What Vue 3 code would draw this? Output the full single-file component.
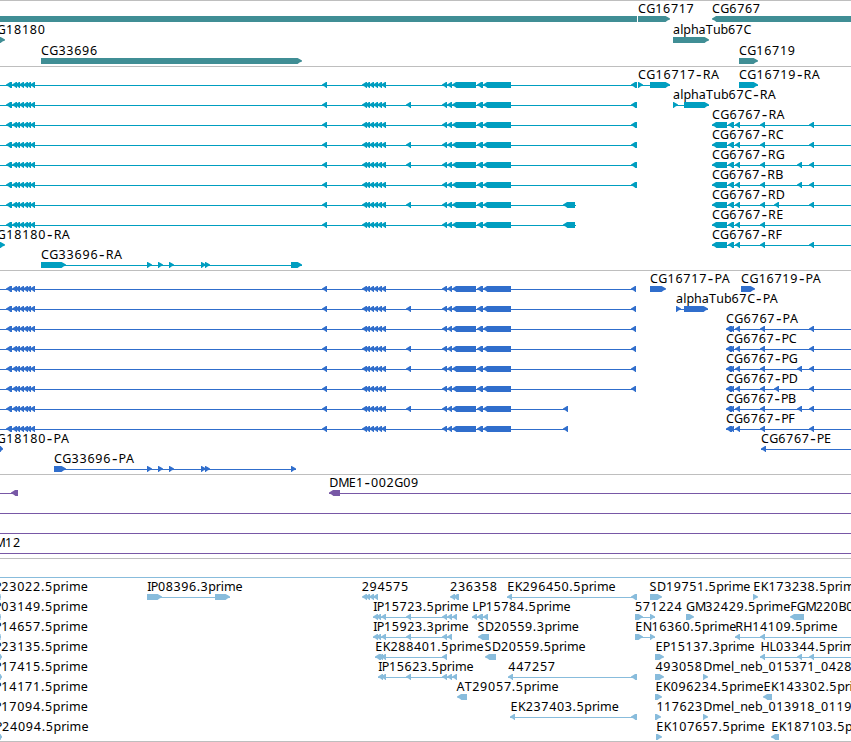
<script setup>
const WIDTH = 851

// Relative glyph widths used to distribute a label over its span.
const ADV = {
  C: 8.2, G: 9.1, A: 8.3, R: 8, P: 7.2, B: 8, D: 9.2, E: 7.5, F: 6.7, I: 3.6, L: 6.5, S: 7.6,
  T: 7.2, K: 7.8, N: 9, M: 10.4, H: 9, '-': 7.2, '.': 3.9, _: 6, a: 7.3, l: 3.2, p: 7.6, h: 7.6,
  u: 7.6, b: 7.6, r: 4.9, i: 3.3, m: 11.6, e: 7.3, n: 7.6,
}
const adv = (c) => ADV[c] ?? 7.8

// A label runs from x to end; each glyph gets its own position.
// Returns runs of text, with each hyphen as a run of its own.
function runs([text, x, end]) {
  const total = [...text].reduce((s, c) => s + adv(c), 0)
  const k = (end - x + 1) / total
  let at = x - 0.6
  return text.split(/(-)/).map((part) => {
    const xs = []
    for (const c of part) {
      xs.push((c === '-' ? at + 0.7 : at).toFixed(2))
      at += adv(c) * k
    }
    return { part, x: xs.join(' '), dash: part === '-' }
  })
}

function arrow([x1, x2, dir], y) {
  const w = x2 - x1
  const head = Math.min(5, w)
  const mid = head * 0.5
  if (dir === '<') {
    return `M${x1} ${y + 2.6}L${x1 + mid} ${y + 1}L${x1 + head - 1} ${y}H${x2}V${y + 6}H${x1 + head - 0.6}L${x1 + mid} ${y + 4.6}L${x1} ${y + 3.6}Z`
  }
  if (dir === '>') {
    return `M${x2} ${y + 2.4}L${x2 - mid} ${y + 1}L${x2 - head + 0.6} ${y}H${x1}V${y + 6}H${x2 - head + 0.6}L${x2 - mid} ${y + 4.6}L${x2} ${y + 3.4}Z`
  }
  return `M${x1} ${y}H${x2}V${y + 6}H${x1}Z`
}

const L = (...starts) => starts.map((s) => [s, s + 5, '<'])
const R = (...starts) => starts.map((s) => [s, s + 5, '>'])
// row: y of the box top, connecting lines, boxes, labels
const row = (y, lines, boxes, labels = []) => ({ y, lines, boxes, labels })

const genes = [
  row(16, [], [[0, 637, '='], [638, 670, '>'], [712, 860, '<']], [['CG16717', 638.5, 694], ['CG6767', 712.5, 760.3]]),
  row(37, [], [[0, 5, '>'], [673, 709, '>']], [['CG18180', -11, 45.3], ['alphaTub67C', 673.5, 751.3]]),
  row(58, [], [[41, 302, '>'], [739, 758, '>']], [['CG33696', 41.5, 97.5], ['CG16719', 739.5, 795.3]]),
]

const farLeft = [[6, 12, '<'], ...L(12, 15, 19, 23, 26, 30)]
const core = [
  ...farLeft, ...L(322, 362, 365, 369, 373, 377, 381), ...L(442, 447),
  [452, 476, '<'], [477, 483, '<'], [483, 511, '<'],
]
const withExtra = [1, 3, 4, 6]

function longRows(top, tail, shortTail, tailEnd, shortEnd) {
  return Array.from({ length: 8 }, (_, i) => {
    const short = i > 5
    return row(top + 20 * i, [[0, short ? shortEnd : tailEnd]],
      [...core, ...(withExtra.includes(i) ? L(406) : []), short ? shortTail : tail])
  })
}

const transcripts = [
  ...longRows(82, [631, 637, '<'], [563, 575, '<'], 637, 576),
  row(82, [[638, 670], [739, 758]], [...R(638), [650, 670, '>'], [739, 758, '>']],
    [['CG16717-RA', 638.5, 719], ['CG16719-RA', 739.5, 819.8]]),
  row(102, [[673, 709]], [...R(673), [684, 709, '>']], [['alphaTub67C-RA', 673.5, 775.7]]),
  ...[['A', 784.6, [809]], ['C', 783.6, [809]], ['G', 784.6, [797, 809]], ['B', 782.8, [797, 809]],
    ['D', 784.5, [774, 809]], ['E', 783.3, []], ['F', 781.8, [809]]].map(([k, end, xs], i) =>
    row(122 + 20 * i, [[712, WIDTH]], [[712, 727, '<'], [728, 734, '<'], ...L(735, 760, ...xs)],
      [[`CG6767-R${k}`, 712.5, end]])),
  row(242, [], [[0, 5, '>']], [['CG18180-RA', -11, 70]]),
  row(262, [[41, 302]], [[41, 66, '>'], ...R(147, 158, 169, 201, 205), [291, 302, '>']],
    [['CG33696-RA', 41.5, 122]]),
]

const proteins = [
  ...longRows(286, [631, 636, '<'], [563, 568, '<'], 636, 568),
  row(286, [], [[650, 666, '>'], [741, 755, '>']],
    [['CG16717-PA', 650.5, 729.8], ['CG16719-PA', 741.7, 820.8]]),
  row(306, [[676, 708]], [...R(676), [684, 708, '>']], [['alphaTub67C-PA', 676.5, 777.8]]),
  ...[['A', 798, [809]], ['C', 796.6, [809]], ['G', 797.5, [797, 809]], ['D', 797.4, [774, 809]],
    ['B', 795.6, [797, 809]], ['F', 794.6, [809]]].map(([k, end, xs], i) =>
    row(326 + 20 * i, [[726, WIDTH]], [[726, 732, '<'], ...L(729, 735, 760, ...xs)],
      [[`CG6767-P${k}`, 726.5, end]])),
  row(446, [[761, WIDTH]], [[0, 3, '>'], ...L(761)], [['CG18180-PA', -11, 69], ['CG6767-PE', 761.5, 831.2]]),
  row(466, [[54, 296]], [[54, 66, '>'], ...R(147, 158, 169, 201, 205, 291)], [['CG33696-PA', 54.5, 134]]),
]

const clones = [
  row(490, [[0, 18], [329, WIDTH]], [[11, 18, '<'], [329, 340, '<']], [['DME1-002G09', 329.8, 418.4]]),
  row(510, [[0, WIDTH]], []),
  row(530, [[0, WIDTH]], []),
  row(550, [[0, WIDTH]], [], [['M12', -5, 20.6]]),
]

const left = ['23022', '03149', '14657', '23135', '17415', '14171', '17094', '24094']
const stub = [1, 1, 1, 2, 2, 0, 0, 2]
const ests = [
  row(574, [[0, WIDTH]], []),
  ...left.map((n, i) => row(594 + 20 * i, [],
    stub[i] ? [[0, stub[i], '>']] : [], [[`P${n}.5prime`, i === 7 ? -4.6 : -5.4, i === 7 ? 88.4 : 87.7]])),
  row(594, [[147, 230], [507, 637]],
    [[147, 162, '>'], [215, 230, '>'], ...L(362, 365, 369, 373, 450), [453, 459, '<'], ...L(507),
      [631, 637, '<'], [650, 662, '>'], ...R(753)],
    [['IP08396.3prime', 147.8, 242.4], ['294575', 362.3, 408.4], ['236358', 450.5, 497.4],
      ['EK296450.5prime', 507.8, 615.4], ['SD19751.5prime', 650, 750.2], ['EK173238.5prime', 753.8, 861.4]]),
  row(614, [[373, 457], [635, 655], [472, 488]],
    [...L(373, 376, 381, 406, 442, 447, 452, 472), [477, 483, '<'], ...L(483), [635, 643, '>'],
      ...R(650), [686, 694, '>'], [790, 804, '<']],
    [['IP15723.5prime', 373.8, 468.4], ['LP15784.5prime', 472.8, 570.4], ['571224', 635.5, 682],
      ['GM32429.5prime', 686.5, 790], ['FGM220B09', 790.8, 861]]),
  row(634, [[373, 452], [635, 655], [735, WIDTH]],
    [...L(373, 376, 381, 406, 442, 447), [478, 489, '<'], [635, 643, '>'], ...R(650), ...L(735, 760)],
    [['IP15923.3prime', 373.8, 468.4], ['SD20559.3prime', 478, 578.6], ['EN16360.5prime', 635.8, 736],
      ['RH14109.5prime', 735.8, 837.4]]),
  row(654, [[375, 447], [760, WIDTH]],
    [[375, 381, '<'], ...L(378, 381, 442), [485, 496, '<'], [655, 664, '>'], ...L(760, 797, 809)],
    [['EK288401.5prime', 375.8, 483.4], ['SD20559.5prime', 485, 585.4], ['EP15137.3prime', 656, 754.4],
      ['HL03344.5prime', 761, 861.4]]),
  row(674, [[378, 457], [508, 637]],
    [...L(378, 381, 406, 442, 447, 452, 508), [631, 637, '<'], [655, 664, '>'], ...R(703)],
    [['IP15623.5prime', 378.8, 473.4], ['447257', 508.8, 555.4], ['493058', 656, 702.2],
      ['Dmel_neb_015371_0428', 703.8, 851.5]]),
  row(694, [], [[457, 467, '<'], [655, 662, '>'], [763, 772, '<']],
    [['AT29057.5prime', 457, 558.6], ['EK096234.5prime', 656, 763.4], ['EK143302.5prime', 764, 871.4]]),
  row(714, [[510, 637]], [...L(510), [631, 637, '<'], [655, 661, '>'], ...R(703)],
    [['EK237403.5prime', 511, 618.6], ['117623', 657, 702.2], ['Dmel_neb_013918_0119', 703.8, 851.5]]),
  row(734, [], [[656, 662, '>'], [771, 779, '<']],
    [['EK107657.5prime', 656.8, 764.6], ['EK187103.5prime', 771.8, 879.4]]),
]

const tracks = [
  { name: 'genes', top: 0, height: 66, rows: genes },
  { name: 'transcripts', top: 66, height: 204, rows: transcripts },
  { name: 'proteins', top: 270, height: 204, rows: proteins },
  { name: 'clones', top: 474, height: 84, rows: clones },
  { name: 'ests', top: 558, height: 183, rows: ests },
]
</script>

<template>
  <main class="browser">
    <section v-for="t in tracks" :key="t.name" class="track" :class="t.name">
      <svg :width="WIDTH" :height="t.height - 1" :viewBox="`0 ${t.top + 1} ${WIDTH} ${t.height - 1}`">
        <g v-for="(r, i) in t.rows" :key="i" class="feature">
          <rect v-for="(l, j) in r.lines" :key="'l' + j" :x="l[0]" :y="r.y + 3" :width="l[1] - l[0]" height="1" />
          <path v-for="(b, j) in r.boxes" :key="'b' + j" :d="arrow(b, r.y)" />
        </g>
        <g class="labels">
          <template v-for="(r, i) in t.rows" :key="i">
            <text v-for="l in r.labels" :key="l[0]" :y="r.y - 3"><tspan
              v-for="(s, j) in runs(l)" :key="j" :x="s.x" :y="r.y - (s.dash ? 2 : 3)" :class="{ dash: s.dash }">{{ s.part }}</tspan></text>
          </template>
        </g>
      </svg>
    </section>
  </main>
</template>

<style>
body {
  margin: 0;
  background: #fff;
}
</style>

<style scoped>
.browser {
  width: 851px;
  height: 742px;
  box-sizing: border-box;
  overflow: hidden;
  background: #fff;
  border-bottom: 1px solid #bebebe;
}
.track {
  border-top: 1px solid #bebebe;
}
.track svg {
  display: block;
}
.genes .feature { fill: #408e95; }
.transcripts .feature { fill: #009ec0; }
.proteins .feature { fill: #306ecc; }
.clones .feature { fill: #7858a6; }
.ests .feature { fill: #88bcdc; }
.labels {
  fill: #000;
  font-family: "Noto Sans", "DejaVu Sans", sans-serif;
  font-size: 12.5px;
}
.dash {
  font-size: 17px;
}
</style>
